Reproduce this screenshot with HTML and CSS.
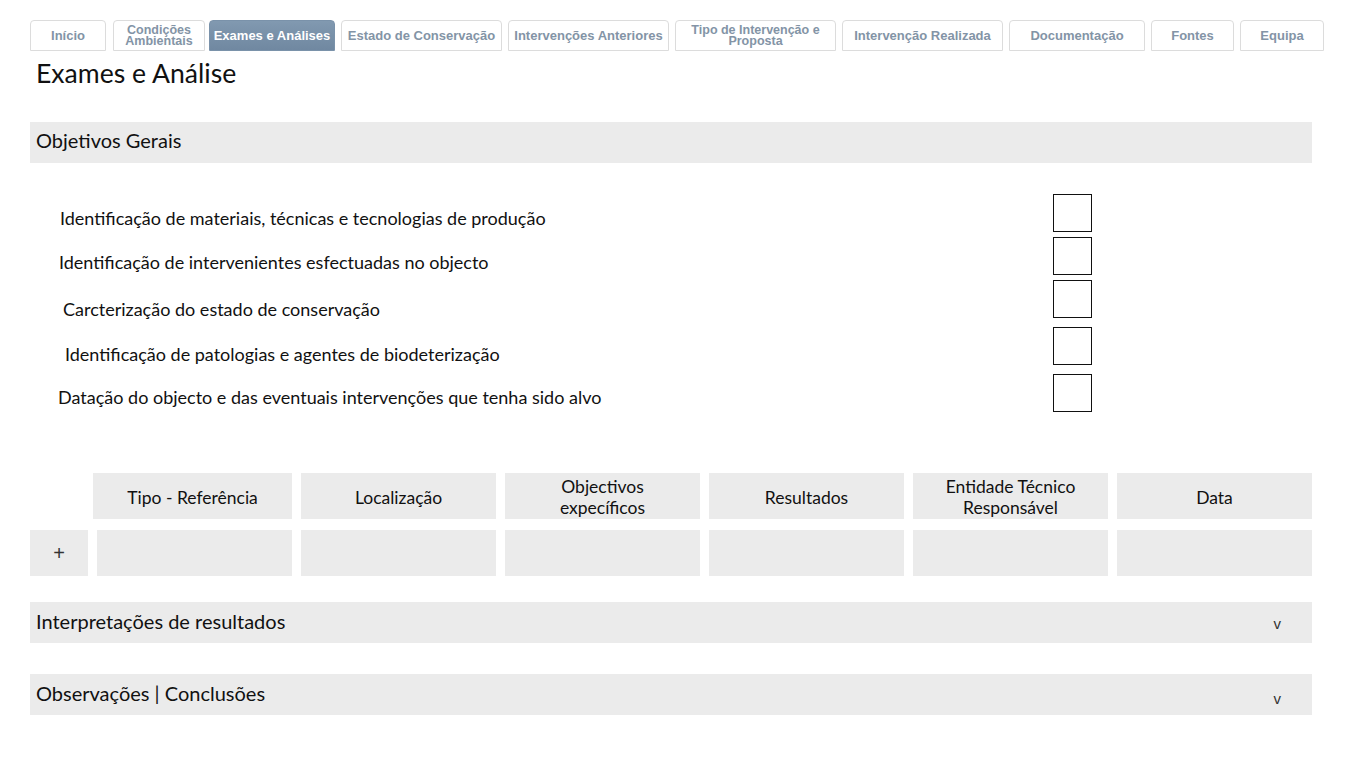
FILE: index.html
```html
<!DOCTYPE html>
<html lang="pt">
<head>
<meta charset="utf-8">
<title>Exames e Análise</title>
<link rel="stylesheet" href="styles.css">
</head>
<body>
<div class="page">
  <nav class="tabs">
    <div class="tab">Início</div>
    <div class="tab two">Condições<br>Ambientais</div>
    <div class="tab active">Exames e Análises</div>
    <div class="tab">Estado de Conservação</div>
    <div class="tab">Intervenções Anteriores</div>
    <div class="tab two">Tipo de Intervenção e<br>Proposta</div>
    <div class="tab">Intervenção Realizada</div>
    <div class="tab">Documentação</div>
    <div class="tab">Fontes</div>
    <div class="tab">Equipa</div>
  </nav>

  <h1 class="title">Exames e Análise</h1>

  <div class="bar bar-first"><span class="bar-label">Objetivos Gerais</span></div>

  <div class="checklist">
    <div class="check-row"><span class="check-text">Identificação de materiais, técnicas e tecnologias de produção</span><span class="box"></span></div>
    <div class="check-row"><span class="check-text">Identificação de intervenientes esfectuadas no objecto</span><span class="box"></span></div>
    <div class="check-row"><span class="check-text">Carcterização do estado de conservação</span><span class="box"></span></div>
    <div class="check-row"><span class="check-text">Identificação de patologias e agentes de biodeterização</span><span class="box"></span></div>
    <div class="check-row"><span class="check-text">Datação do objecto e das eventuais intervenções que tenha sido alvo</span><span class="box"></span></div>
  </div>

  <div class="table">
    <div class="blank"></div>
    <div class="th">Tipo - Referência</div>
    <div class="th">Localização</div>
    <div class="th">Objectivos<br>expecíficos</div>
    <div class="th">Resultados</div>
    <div class="th">Entidade Técnico<br>Responsável</div>
    <div class="th">Data</div>

    <div class="td add">+</div>
    <div class="td"></div>
    <div class="td"></div>
    <div class="td"></div>
    <div class="td"></div>
    <div class="td"></div>
    <div class="td"></div>
  </div>

  <div class="bar bar-interp"><span class="bar-label">Interpretações de resultados</span><span class="chev">v</span></div>
  <div class="bar bar-obs"><span class="bar-label">Observações | Conclusões</span><span class="chev chev-low">v</span></div>
</div>
</body>
</html>
```

FILE: styles.css
```css
* { box-sizing: border-box; }
html, body { margin: 0; padding: 0; background: #fff; }
body { font-family: Lato, "Open Sans", sans-serif; color: #111; }

.page { padding: 20px 54px 40px 30px; width: 1366px; }

/* tabs */
.tabs { display: flex; gap: 6px; height: 31px; }
.tab {
  flex-shrink: 0;
  height: 31px;
  border: 1px solid #dcdcdc;
  border-radius: 4px 4px 0 0;
  display: flex; align-items: center; justify-content: center; text-align: center;
  font-family: "Liberation Sans", Arial, sans-serif;
  font-size: 13px; font-weight: bold;
  color: #8394a6;
  background: #fff;
  white-space: nowrap;
}
.tab.two { font-size: 12.5px; line-height: 11.5px; padding-top: 1px; }
.tab.active {
  background: linear-gradient(#8199b0, #7088a1);
  border-color: #7a92aa;
  color: #fff;
}
.tab:nth-child(1) { width: 76px; }
.tab:nth-child(2) { width: 92px; margin-left: 1px; }
.tab:nth-child(3) { width: 126px; margin-left: -2px; }
.tab:nth-child(4),
.tab:nth-child(5),
.tab:nth-child(6),
.tab:nth-child(7) { width: 161px; }
.tab:nth-child(8) { width: 136px; }
.tab:nth-child(9) { width: 83px; }
.tab:nth-child(10) { width: 84px; }

/* title */
.title {
  margin: 7px 0 0 6px;
  font-family: Lato, sans-serif;
  font-weight: normal;
  font-size: 26.6px;
  line-height: 30px;
  color: #111;
}

/* bars */
.bar {
  background: #ebebeb;
  height: 41px;
  display: flex; align-items: center; justify-content: space-between;
  padding: 0 31px 0 6px;
}
.bar-label { font-size: 20px; color: #111; padding-bottom: 4px; }
.bar-first .bar-label { padding-bottom: 6px; }
.bar-first { margin-top: 34px; }
.bar-interp { margin-top: 26px; }
.bar-obs { margin-top: 31px; }
.chev {
  font-family: "Liberation Sans", Arial, sans-serif;
  font-size: 15px; color: #333; padding-top: 2px;
}
.chev-low { padding-top: 8px; }

/* checklist */
.checklist { margin-top: 31px; display: flex; flex-direction: column; gap: 5px; }
.check-row { display: flex; align-items: center; height: 38px; }
.check-text { width: 1023px; font-size: 18px; color: #111; padding-top: 10px; }
.box { width: 39px; height: 38px; border: 1.5px solid #111; }
.check-row:nth-child(1) .check-text { padding-left: 30px; }
.check-row:nth-child(2) .check-text { padding-left: 29px; padding-top: 12px; }
.check-row:nth-child(3) .check-text { padding-left: 33px; padding-top: 19px; }
.check-row:nth-child(4) { margin-top: 4px; }
.check-row:nth-child(4) .check-text { padding-left: 35px; padding-top: 16px; }
.check-row:nth-child(5) { margin-top: 4px; }
.check-row:nth-child(5) .check-text { padding-left: 28px; padding-top: 8px; }

/* table */
.table {
  margin-top: 61px;
  display: grid;
  grid-template-columns: 58px repeat(6, 195px);
  column-gap: 9px;
  row-gap: 11px;
}
.th {
  background: #ebebeb;
  height: 46px;
  display: flex; align-items: center; justify-content: center; text-align: center;
  font-size: 17.5px; line-height: 21px; color: #111;
  padding-top: 2px;
}
.th:nth-child(2) { margin-left: -4px; }
.td { background: #ebebeb; height: 46px; }
.add {
  display: flex; align-items: center; justify-content: center;
  font-family: "Liberation Sans", Arial, sans-serif;
  font-size: 20px; font-weight: 300; color: #333;
}
```
